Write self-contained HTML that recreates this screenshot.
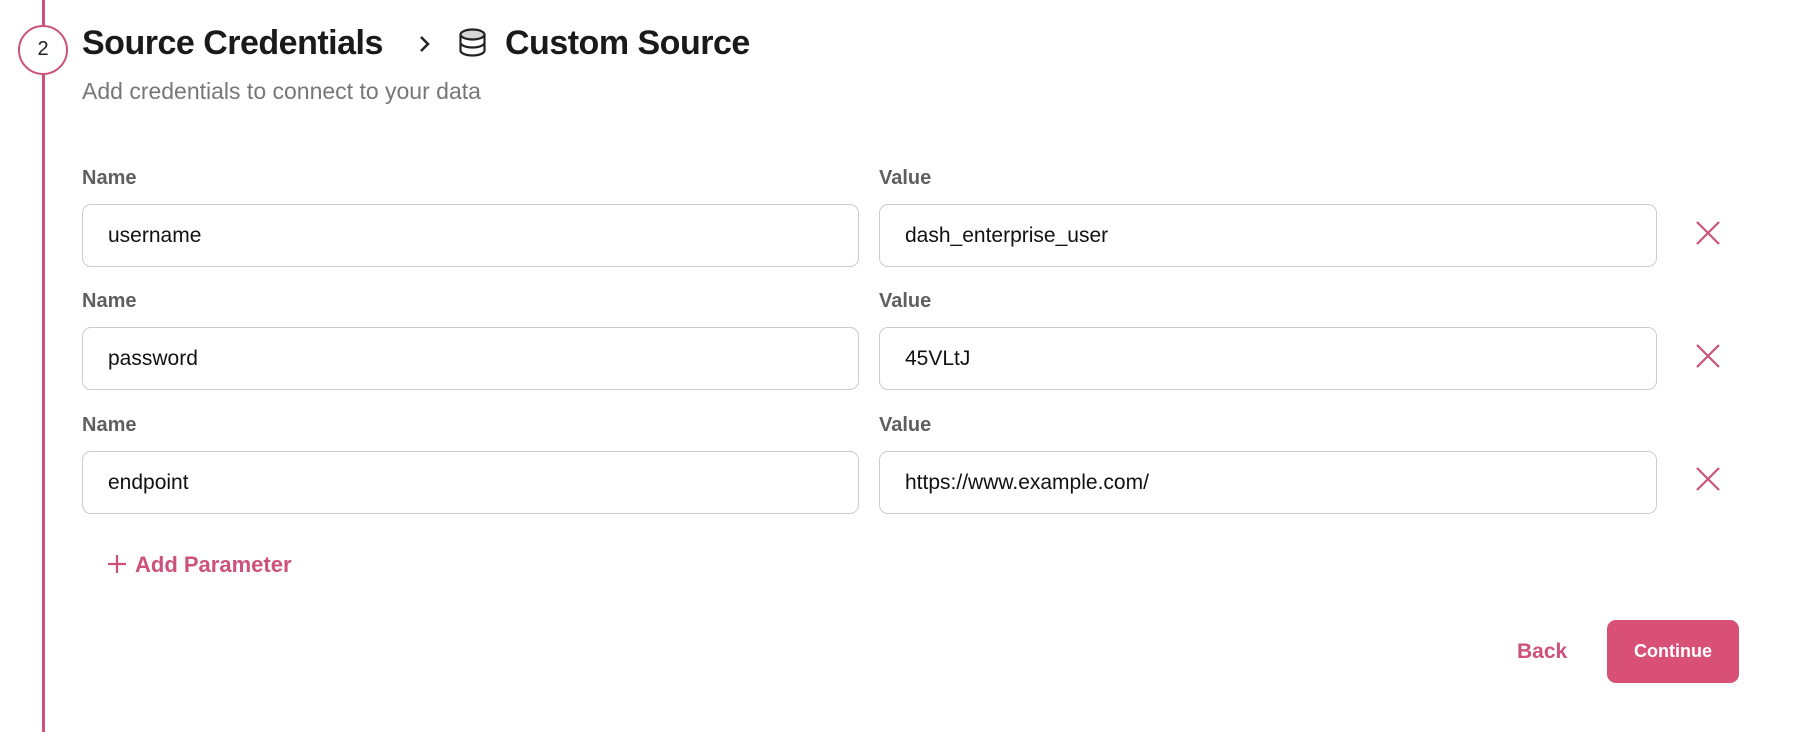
<!DOCTYPE html>
<html><head><meta charset="utf-8"><style>
*{box-sizing:border-box;margin:0;padding:0}
body{width:1800px;height:732px;background:#fff;font-family:"Liberation Sans",Arial,sans-serif;position:relative;overflow:hidden;color:#1a1a1a}
.vl{position:absolute;left:42px;width:3px;background:#cc527c}
.circle{position:absolute;left:18px;top:25px;width:50px;height:50px;border:2.5px solid #cc527c;border-radius:50%;text-align:center;line-height:45px;font-size:20px;color:#222}
.title{position:absolute;top:24px;font-size:34px;font-weight:bold;letter-spacing:-0.5px;color:#1a1a1a}
.sub{position:absolute;left:82px;top:78px;font-size:23px;color:#777}
.lbl{position:absolute;font-size:20px;font-weight:bold;color:#5f5f5f}
.inp{position:absolute;height:63px;border:1.5px solid #ccc;border-radius:9px;font-size:21px;line-height:62px;padding-left:25px;color:#111}
.x{position:absolute;width:24px;height:24px}
.add{position:absolute;left:135px;top:552px;font-size:22px;font-weight:bold;color:#cc527c}
.back{position:absolute;left:1517px;top:640px;font-size:21px;font-weight:bold;color:#cc527c}
.cont{position:absolute;left:1607px;top:620px;width:132px;height:63px;background:#d95077;border-radius:9px;color:#fff;font-weight:bold;font-size:18px;text-align:center;line-height:63px}
</style></head><body>
<div class="vl" style="top:0;height:25px"></div>
<div class="vl" style="top:75px;height:657px"></div>
<div class="circle">2</div>
<div class="title" style="left:82px">Source Credentials</div>
<svg style="position:absolute;left:416px;top:33px" width="16" height="22" viewBox="0 0 16 22"><path d="M5 4l7 7-7 7" fill="none" stroke="#222" stroke-width="2.5"/></svg>
<svg style="position:absolute;left:458px;top:28px" width="29" height="29" viewBox="0 0 29 29">
<ellipse cx="14.5" cy="6.5" rx="12" ry="5" fill="#d6d6d6" stroke="#222" stroke-width="2.2"/>
<path d="M2.5 6.5v16c0 2.8 5.4 5 12 5s12-2.2 12-5v-16M2.5 14.5c0 2.8 5.4 5 12 5s12-2.2 12-5" fill="none" stroke="#222" stroke-width="2.2"/></svg>
<div class="title" style="left:505px">Custom Source</div>
<div class="sub">Add credentials to connect to your data</div>

<div class="lbl" style="left:82px;top:167px">Name</div><div class="lbl" style="left:879px;top:167px">Value</div>
<div class="inp" style="left:82px;top:204px;width:777px">username</div>
<div class="inp" style="left:879px;top:204px;width:778px">dash_enterprise_user</div>
<div class="lbl" style="left:82px;top:290px">Name</div><div class="lbl" style="left:879px;top:290px">Value</div>
<div class="inp" style="left:82px;top:327px;width:777px">password</div>
<div class="inp" style="left:879px;top:327px;width:778px">45VLtJ</div>
<div class="lbl" style="left:82px;top:414px">Name</div><div class="lbl" style="left:879px;top:414px">Value</div>
<div class="inp" style="left:82px;top:451px;width:777px">endpoint</div>
<div class="inp" style="left:879px;top:451px;width:778px">https://www.example.com/</div>

<svg class="x" style="left:1696px;top:221px" viewBox="0 0 24 24"><path d="M1 1l22 22M23 1L1 23" stroke="#cc527c" stroke-width="2.2"/></svg>
<svg class="x" style="left:1696px;top:344px" viewBox="0 0 24 24"><path d="M1 1l22 22M23 1L1 23" stroke="#cc527c" stroke-width="2.2"/></svg>
<svg class="x" style="left:1696px;top:467px" viewBox="0 0 24 24"><path d="M1 1l22 22M23 1L1 23" stroke="#cc527c" stroke-width="2.2"/></svg>

<svg style="position:absolute;left:108px;top:555px" width="18" height="18" viewBox="0 0 18 18"><path d="M9 0v18M0 9h18" stroke="#cc527c" stroke-width="2.2"/></svg>
<div class="add">Add Parameter</div>
<div class="back">Back</div>
<div class="cont">Continue</div>
</body></html>
